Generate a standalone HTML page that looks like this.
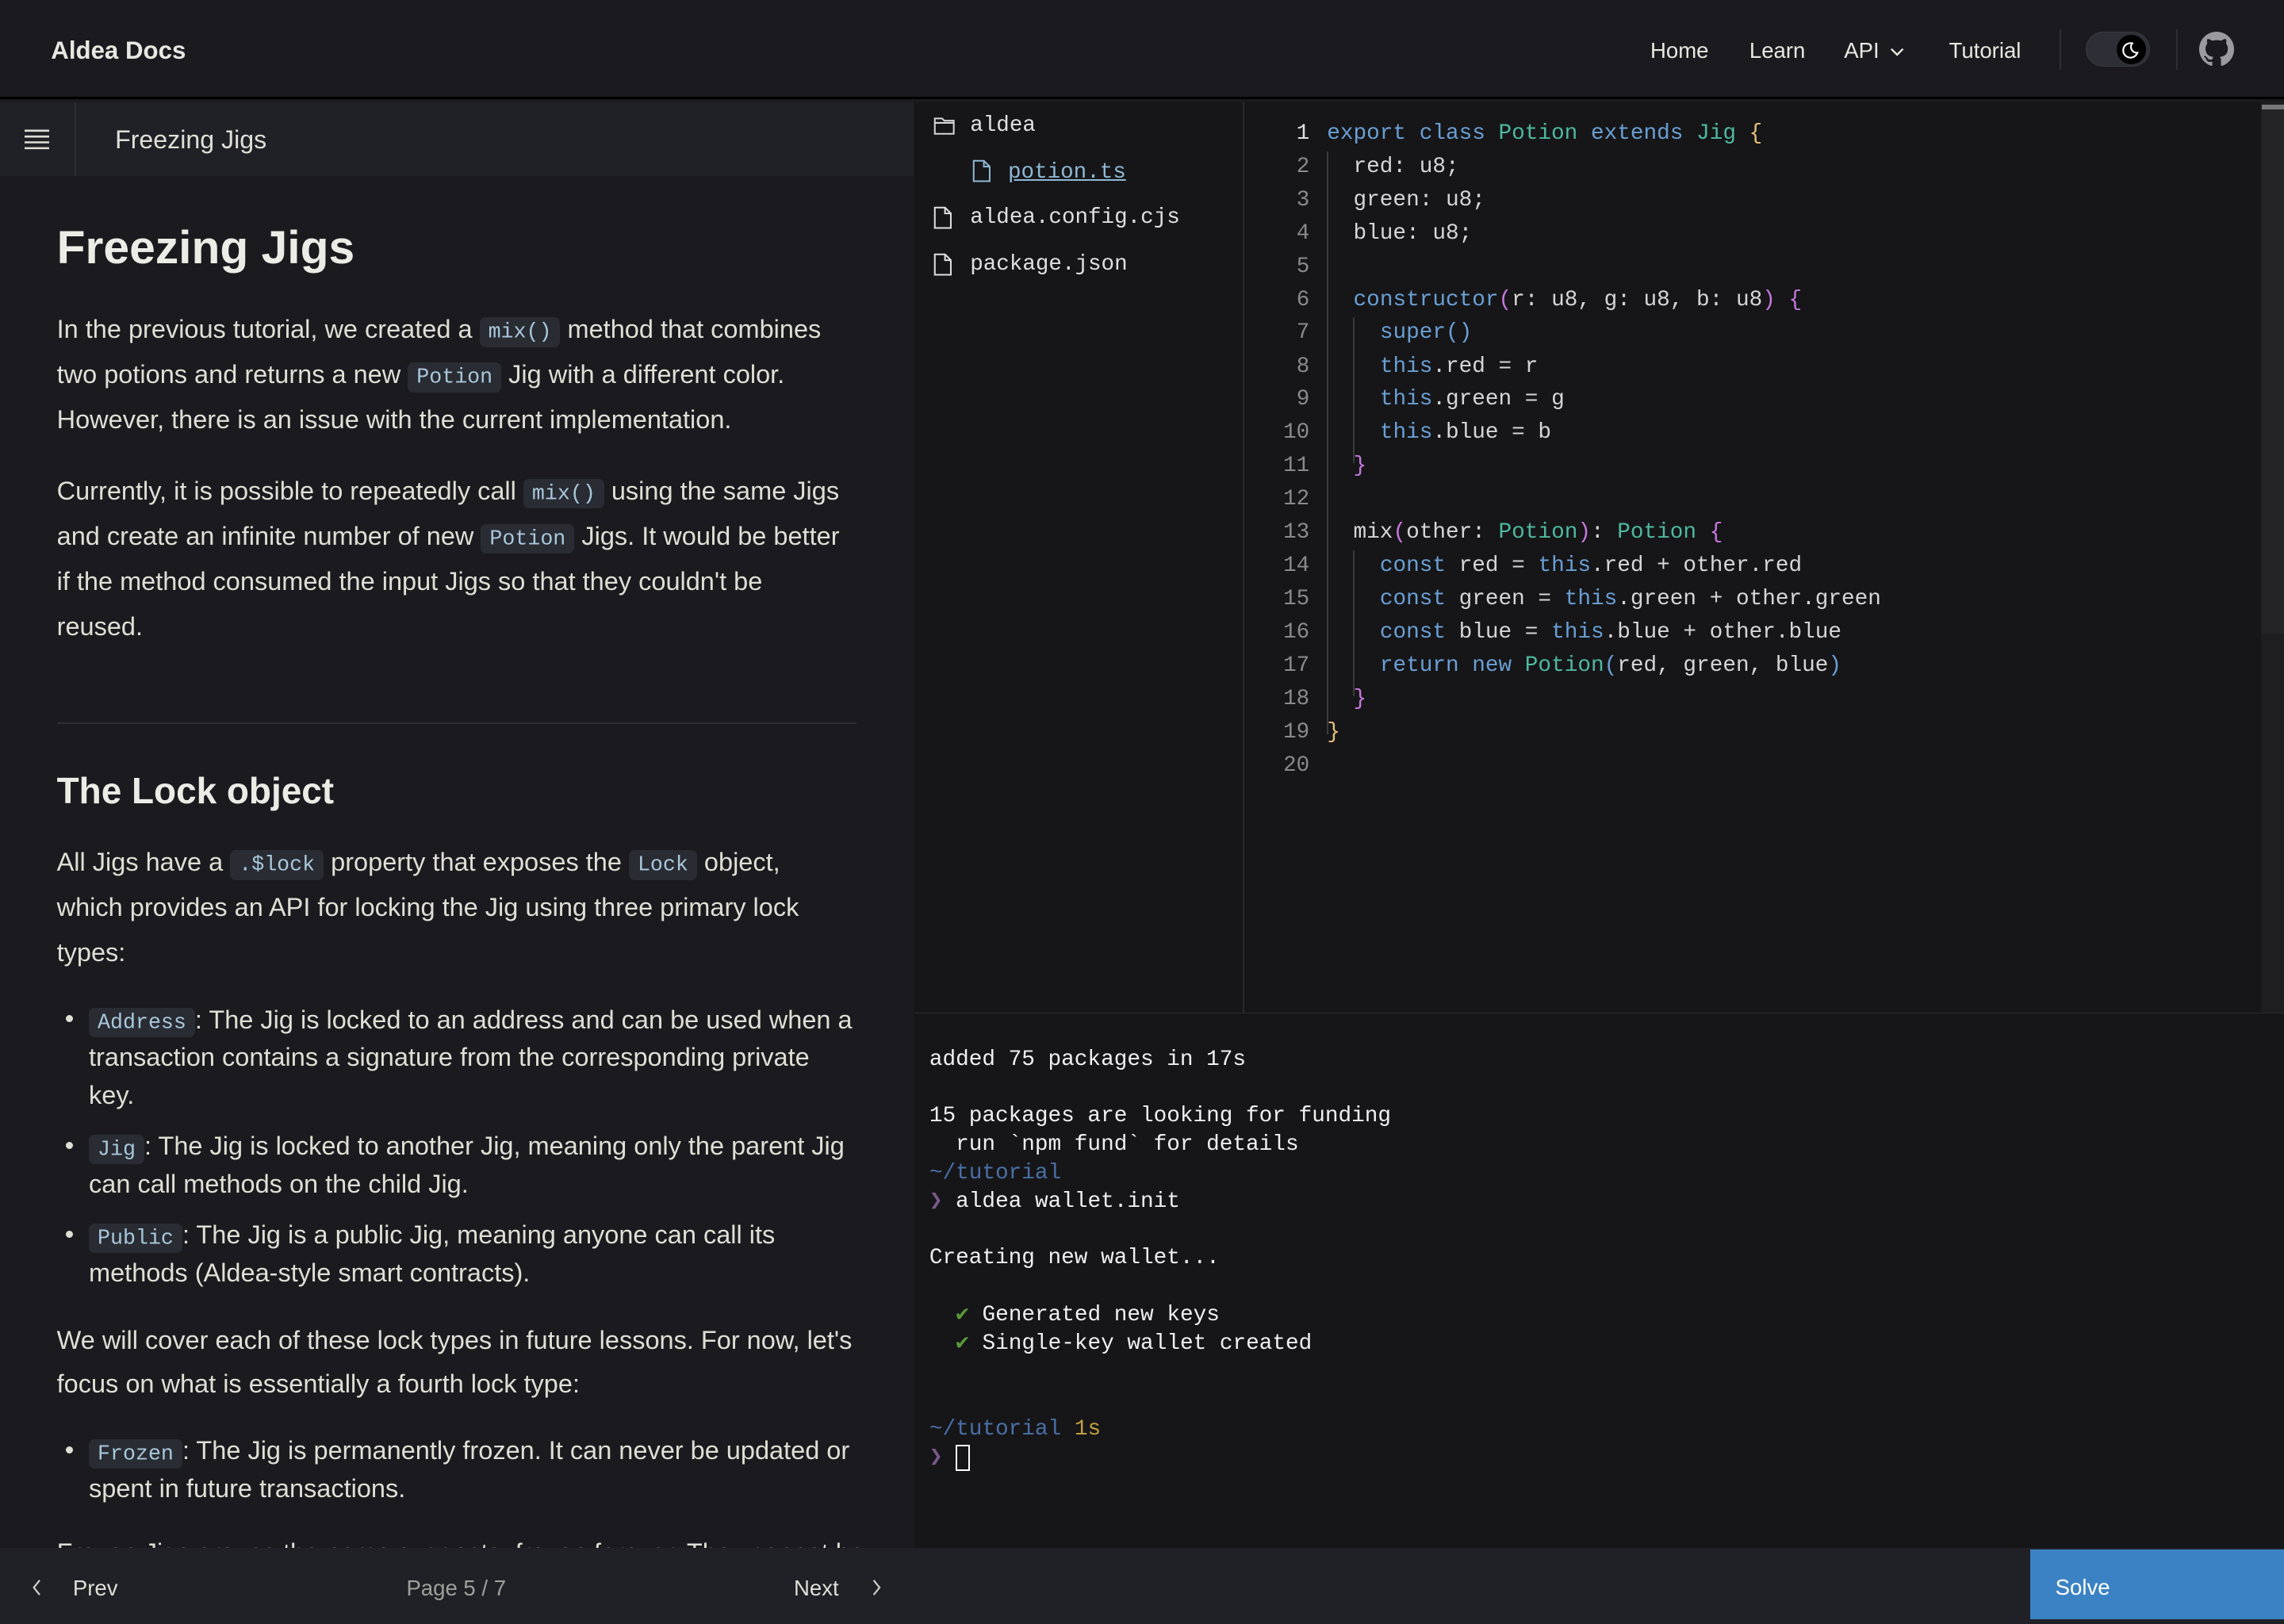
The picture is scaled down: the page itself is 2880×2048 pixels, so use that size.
<!DOCTYPE html>
<html><head><meta charset="utf-8"><style>
*{margin:0;padding:0;box-sizing:border-box}
html,body{width:2880px;height:2048px;overflow:hidden;background:#1b1b1f}
#root{zoom:1.836735;width:1568px;height:1115px;position:relative;font-family:"Liberation Sans",sans-serif;color:#dfdfd6;overflow:hidden}
.abs{position:absolute;white-space:nowrap}
.hdr{left:0;top:0;width:1568px;height:68px;background:#1b1b1f;border-bottom:2px solid #000}
.nav{font-size:15px;color:#e8e8e2;top:26px}
.sub{left:0;top:70px;width:627px;height:51px;background:#202127}
.p{font-size:17.7px;color:#dfdfd6;left:39px;line-height:22px}
code{font-family:"Liberation Mono",monospace;font-size:14.5px;background:#2a2c33;color:#a8c8dc;padding:2px 6px;border-radius:4px}
.mono{font-family:"Liberation Mono",monospace}
.ln{font-family:"Liberation Mono",monospace;font-size:15px;color:#8a8a8a;width:40px;text-align:right;left:859px;line-height:23px}
.cd{font-family:"Liberation Mono",monospace;font-size:15.1px;color:#d6d6d6;left:911px;line-height:23px;white-space:pre}
.k{color:#6a9fd4}.t{color:#4fb8a0}.y{color:#e5c07b}.m{color:#c678dd}
.tm{font-family:"Liberation Mono",monospace;font-size:15.1px;color:#f0f0f0;left:638px;line-height:19.5px;white-space:pre}
.bul{width:5px;height:5px;border-radius:50%;background:#dfdfd6;left:45px}
</style></head><body><div id="root">
<div class="abs hdr"></div>
<div class="abs" style="left:35px;top:25px;font-size:17px;font-weight:bold;color:#e8e8e2">Aldea Docs</div>
<div class="abs nav" style="left:1133px">Home</div>
<div class="abs nav" style="left:1201px">Learn</div>
<div class="abs nav" style="left:1266px">API <svg width="10" height="8" viewBox="0 0 10 8" style="margin-left:3px"><path d="M1 2l4 4 4-4" stroke="#e8e8e2" fill="none" stroke-width="1.3"/></svg></div>
<div class="abs nav" style="left:1338px">Tutorial</div>
<div class="abs" style="left:1414px;top:20px;width:1px;height:28px;background:#2e2e33"></div>
<div class="abs" style="left:1432px;top:22px;width:44px;height:24px;border-radius:12px;background:#2e2f36;border:1px solid #3a3b42"></div>
<div class="abs" style="left:1453px;top:24px;width:20px;height:20px;border-radius:50%;background:#000"></div>
<svg class="abs" style="left:1456px;top:27px" width="14" height="14" viewBox="0 0 14 14"><path d="M8 2.5A5 5 0 1 0 11.5 9 4 4 0 0 1 8 2.5z" stroke="#fff" fill="none" stroke-width="1.2"/></svg>
<div class="abs" style="left:1494px;top:20px;width:1px;height:28px;background:#2e2e33"></div>
<svg class="abs" style="left:1510px;top:22px" width="24" height="24" viewBox="0 0 16 16"><path fill="#9a9aa0" d="M8 0C3.58 0 0 3.58 0 8c0 3.54 2.29 6.530 5.47 7.59.4.07.55-.17.55-.38 0-.19-.01-.82-.01-1.49-2.01.37-2.53-.49-2.690-.94-.09-.23-.48-.94-.82-1.13-.28-.15-.68-.52-.01-.53.63-.01 1.08.58 1.23.82.72 1.21 1.87.87 2.33.66.07-.52.28-.87.51-1.07-1.78-.2-3.64-.89-3.64-3.95 0-.87.31-1.59.82-2.15-.08-.2-.36-1.02.08-2.12 0 0 .67-.21 2.2.82.64-.18 1.32-.27 2-.27.68 0 1.36.09 2 .27 1.53-1.04 2.2-.82 2.2-.82.44 1.1.16 1.92.08 2.12.51.56.82 1.27.82 2.15 0 3.07-1.87 3.75-3.65 3.95.29.25.54.73.54 1.48 0 1.07-.01 1.93-.01 2.2 0 .21.15.46.55.38A8.013 8.013 0 0016 8c0-4.42-3.58-8-8-8z"/></svg>

<div class="abs sub"></div>
<div class="abs" style="left:51px;top:70px;width:1px;height:51px;background:#2e2f36"></div>
<svg class="abs" style="left:17px;top:89px" width="17" height="14" viewBox="0 0 17 14"><path d="M0 1h17M0 5h17M0 9h17M0 13h17" stroke="#dfdfd6" stroke-width="1.4"/></svg>
<div class="abs" style="left:79px;top:86px;font-size:17.5px;color:#dfdfd6">Freezing Jigs</div>

<div class="abs" style="left:39px;top:152px;font-size:32px;font-weight:bold;color:#ececE6">Freezing Jigs</div>
<div class="abs p" style="top:215px">In the previous tutorial, we created a <code>mix()</code> method that combines</div>
<div class="abs p" style="top:246px">two potions and returns a new <code>Potion</code> Jig with a different color.</div>
<div class="abs p" style="top:277px">However, there is an issue with the current implementation.</div>
<div class="abs p" style="top:326px">Currently, it is possible to repeatedly call <code>mix()</code> using the same Jigs</div>
<div class="abs p" style="top:357px">and create an infinite number of new <code>Potion</code> Jigs. It would be better</div>
<div class="abs p" style="top:388px">if the method consumed the input Jigs so that they couldn't be</div>
<div class="abs p" style="top:419px">reused.</div>
<div class="abs" style="left:39px;top:496px;width:549px;height:1px;background:#2e2f36"></div>
<div class="abs" style="left:39px;top:528px;font-size:25px;font-weight:bold;color:#ececE6">The Lock object</div>
<div class="abs p" style="top:581px">All Jigs have a <code>.$lock</code> property that exposes the <code>Lock</code> object,</div>
<div class="abs p" style="top:612px">which provides an API for locking the Jig using three primary lock</div>
<div class="abs p" style="top:643px">types:</div>
<div class="abs bul" style="top:697px"></div>
<div class="abs p" style="left:61px;top:689px"><code>Address</code>: The Jig is locked to an address and can be used when a</div>
<div class="abs p" style="left:61px;top:715px">transaction contains a signature from the corresponding private</div>
<div class="abs p" style="left:61px;top:741px">key.</div>
<div class="abs bul" style="top:784px"></div>
<div class="abs p" style="left:61px;top:776px"><code>Jig</code>: The Jig is locked to another Jig, meaning only the parent Jig</div>
<div class="abs p" style="left:61px;top:802px">can call methods on the child Jig.</div>
<div class="abs bul" style="top:845px"></div>
<div class="abs p" style="left:61px;top:837px"><code>Public</code>: The Jig is a public Jig, meaning anyone can call its</div>
<div class="abs p" style="left:61px;top:863px">methods (Aldea-style smart contracts).</div>
<div class="abs p" style="top:909px">We will cover each of these lock types in future lessons. For now, let's</div>
<div class="abs p" style="top:939px">focus on what is essentially a fourth lock type:</div>
<div class="abs bul" style="top:993px"></div>
<div class="abs p" style="left:61px;top:985px"><code>Frozen</code>: The Jig is permanently frozen. It can never be updated or</div>
<div class="abs p" style="left:61px;top:1011px">spent in future transactions.</div>
<div class="abs p" style="top:1055px">Frozen Jigs are, as the name suggests, frozen forever. They cannot be</div>

<!-- right side -->
<div class="abs" style="left:627px;top:70px;width:941px;height:993px;background:#161618"></div>
<div class="abs" style="left:853px;top:70px;width:1px;height:625px;background:#2a2a2e"></div>
<div class="abs" style="left:627px;top:695px;width:941px;height:1px;background:#2a2a2e"></div>
<div class="abs" style="left:1552px;top:70px;width:16px;height:625px;background:#1e1e21"></div>
<div class="abs" style="left:1553px;top:72px;width:15px;height:3px;background:#777"></div>
<div class="abs" style="left:1553px;top:75px;width:15px;height:360px;background:#242427"></div>

<svg class="abs" style="left:640px;top:78px" width="16" height="16" viewBox="0 0 16 16"><path d="M1.5 3.5h5l1.5 1.5h6.5v9h-13z M1.5 6.5h13" stroke="#d6d6d6" fill="none" stroke-width="1.1"/></svg>
<div class="abs mono" style="left:666px;top:78px;font-size:15px;color:#e0e0e0">aldea</div>
<svg class="abs" style="left:667px;top:109px" width="14" height="17" viewBox="0 0 14 17"><path d="M1.5 1.5h7l4 4v10h-11z M8.5 1.5v4h4" stroke="#8fb8d4" fill="none" stroke-width="1.1"/></svg>
<div class="abs mono" style="left:692px;top:110px;font-size:15px;color:#8fb8d4;text-decoration:underline">potion.ts</div>
<svg class="abs" style="left:640px;top:141px" width="14" height="17" viewBox="0 0 14 17"><path d="M1.5 1.5h7l4 4v10h-11z M8.5 1.5v4h4" stroke="#e0e0e0" fill="none" stroke-width="1.1"/></svg>
<div class="abs mono" style="left:666px;top:141px;font-size:15px;color:#e0e0e0">aldea.config.cjs</div>
<svg class="abs" style="left:640px;top:173px" width="14" height="17" viewBox="0 0 14 17"><path d="M1.5 1.5h7l4 4v10h-11z M8.5 1.5v4h4" stroke="#e0e0e0" fill="none" stroke-width="1.1"/></svg>
<div class="abs mono" style="left:666px;top:173px;font-size:15px;color:#e0e0e0">package.json</div>

<div class="abs ln" style="top:80.5px;color:#e0e0e0">1</div>
<div class="abs ln" style="top:103.3px">2</div><div class="abs ln" style="top:126.2px">3</div><div class="abs ln" style="top:149px">4</div><div class="abs ln" style="top:171.9px">5</div><div class="abs ln" style="top:194.7px">6</div><div class="abs ln" style="top:217.5px">7</div><div class="abs ln" style="top:240.4px">8</div><div class="abs ln" style="top:263.2px">9</div><div class="abs ln" style="top:286px">10</div><div class="abs ln" style="top:308.9px">11</div><div class="abs ln" style="top:331.7px">12</div><div class="abs ln" style="top:354.6px">13</div><div class="abs ln" style="top:377.4px">14</div><div class="abs ln" style="top:400.2px">15</div><div class="abs ln" style="top:423.1px">16</div><div class="abs ln" style="top:445.9px">17</div><div class="abs ln" style="top:468.8px">18</div><div class="abs ln" style="top:491.6px">19</div><div class="abs ln" style="top:514.4px">20</div>
<div class="abs" style="left:911px;top:104px;width:1px;height:400px;background:#3a3a3e"></div>
<div class="abs" style="left:929px;top:218px;width:1px;height:100px;background:#3a3a3e"></div>
<div class="abs" style="left:929px;top:378px;width:1px;height:100px;background:#3a3a3e"></div>
<div class="abs cd" style="top:80.5px"><span class="k">export class</span> <span class="t">Potion</span> <span class="k">extends</span> <span class="t">Jig</span> <span class="y">{</span></div>
<div class="abs cd" style="top:103.3px">  red: u8;</div>
<div class="abs cd" style="top:126.2px">  green: u8;</div>
<div class="abs cd" style="top:149px">  blue: u8;</div>
<div class="abs cd" style="top:194.7px">  <span class="k">constructor</span><span class="m">(</span>r: u8, g: u8, b: u8<span class="m">)</span> <span class="m">{</span></div>
<div class="abs cd" style="top:217.5px">    <span class="k">super()</span></div>
<div class="abs cd" style="top:240.4px">    <span class="k">this</span>.red = r</div>
<div class="abs cd" style="top:263.2px">    <span class="k">this</span>.green = g</div>
<div class="abs cd" style="top:286px">    <span class="k">this</span>.blue = b</div>
<div class="abs cd" style="top:308.9px">  <span class="m">}</span></div>
<div class="abs cd" style="top:354.6px">  mix<span class="m">(</span>other: <span class="t">Potion</span><span class="m">)</span>: <span class="t">Potion</span> <span class="m">{</span></div>
<div class="abs cd" style="top:377.4px">    <span class="k">const</span> red = <span class="k">this</span>.red + other.red</div>
<div class="abs cd" style="top:400.2px">    <span class="k">const</span> green = <span class="k">this</span>.green + other.green</div>
<div class="abs cd" style="top:423.1px">    <span class="k">const</span> blue = <span class="k">this</span>.blue + other.blue</div>
<div class="abs cd" style="top:445.9px">    <span class="k">return new</span> <span class="t">Potion</span><span class="k">(</span>red, green, blue<span class="k">)</span></div>
<div class="abs cd" style="top:468.8px">  <span class="m">}</span></div>
<div class="abs cd" style="top:491.6px"><span class="y">}</span></div>

<div class="abs tm" style="top:718px">added 75 packages in 17s</div>
<div class="abs tm" style="top:757px">15 packages are looking for funding</div>
<div class="abs tm" style="top:776.5px">  run `npm fund` for details</div>
<div class="abs tm" style="top:796px;color:#4a6fa5">~/tutorial</div>
<div class="abs tm" style="top:815.5px"><span style="color:#7a5a8a">❯</span> aldea wallet.init</div>
<div class="abs tm" style="top:854.5px">Creating new wallet...</div>
<div class="abs tm" style="top:893.5px">  <span style="color:#5a9a3a">✔</span> Generated new keys</div>
<div class="abs tm" style="top:913px">  <span style="color:#5a9a3a">✔</span> Single-key wallet created</div>
<div class="abs tm" style="top:972px;color:#4a6fa5">~/tutorial <span style="color:#c0a040">1s</span></div>
<div class="abs tm" style="top:991.5px"><span style="color:#7a5a8a">❯</span></div>
<div class="abs" style="left:656px;top:992px;width:10px;height:18px;border:1.5px solid #fff"></div>

<div class="abs" style="left:0;top:1063px;width:1568px;height:52px;background:#202127"></div>
<div class="abs" style="left:1394px;top:1064px;width:174px;height:48px;background:#3b82c4"></div>
<div class="abs" style="left:1411px;top:1081px;font-size:15px;color:#fff">Solve</div>
<svg class="abs" style="left:21px;top:1084px" width="8" height="12" viewBox="0 0 8 12"><path d="M6 1L2 6l4 5" stroke="#cfcfc8" fill="none" stroke-width="1.2"/></svg>
<div class="abs" style="left:50px;top:1082px;font-size:15px;color:#dfdfd6">Prev</div>
<div class="abs" style="left:279px;top:1082px;font-size:15px;color:#a0a09a">Page 5 / 7</div>
<div class="abs" style="left:545px;top:1082px;font-size:15px;color:#dfdfd6">Next</div>
<svg class="abs" style="left:598px;top:1084px" width="8" height="12" viewBox="0 0 8 12"><path d="M2 1l4 5-4 5" stroke="#cfcfc8" fill="none" stroke-width="1.2"/></svg>
</div></body></html>
